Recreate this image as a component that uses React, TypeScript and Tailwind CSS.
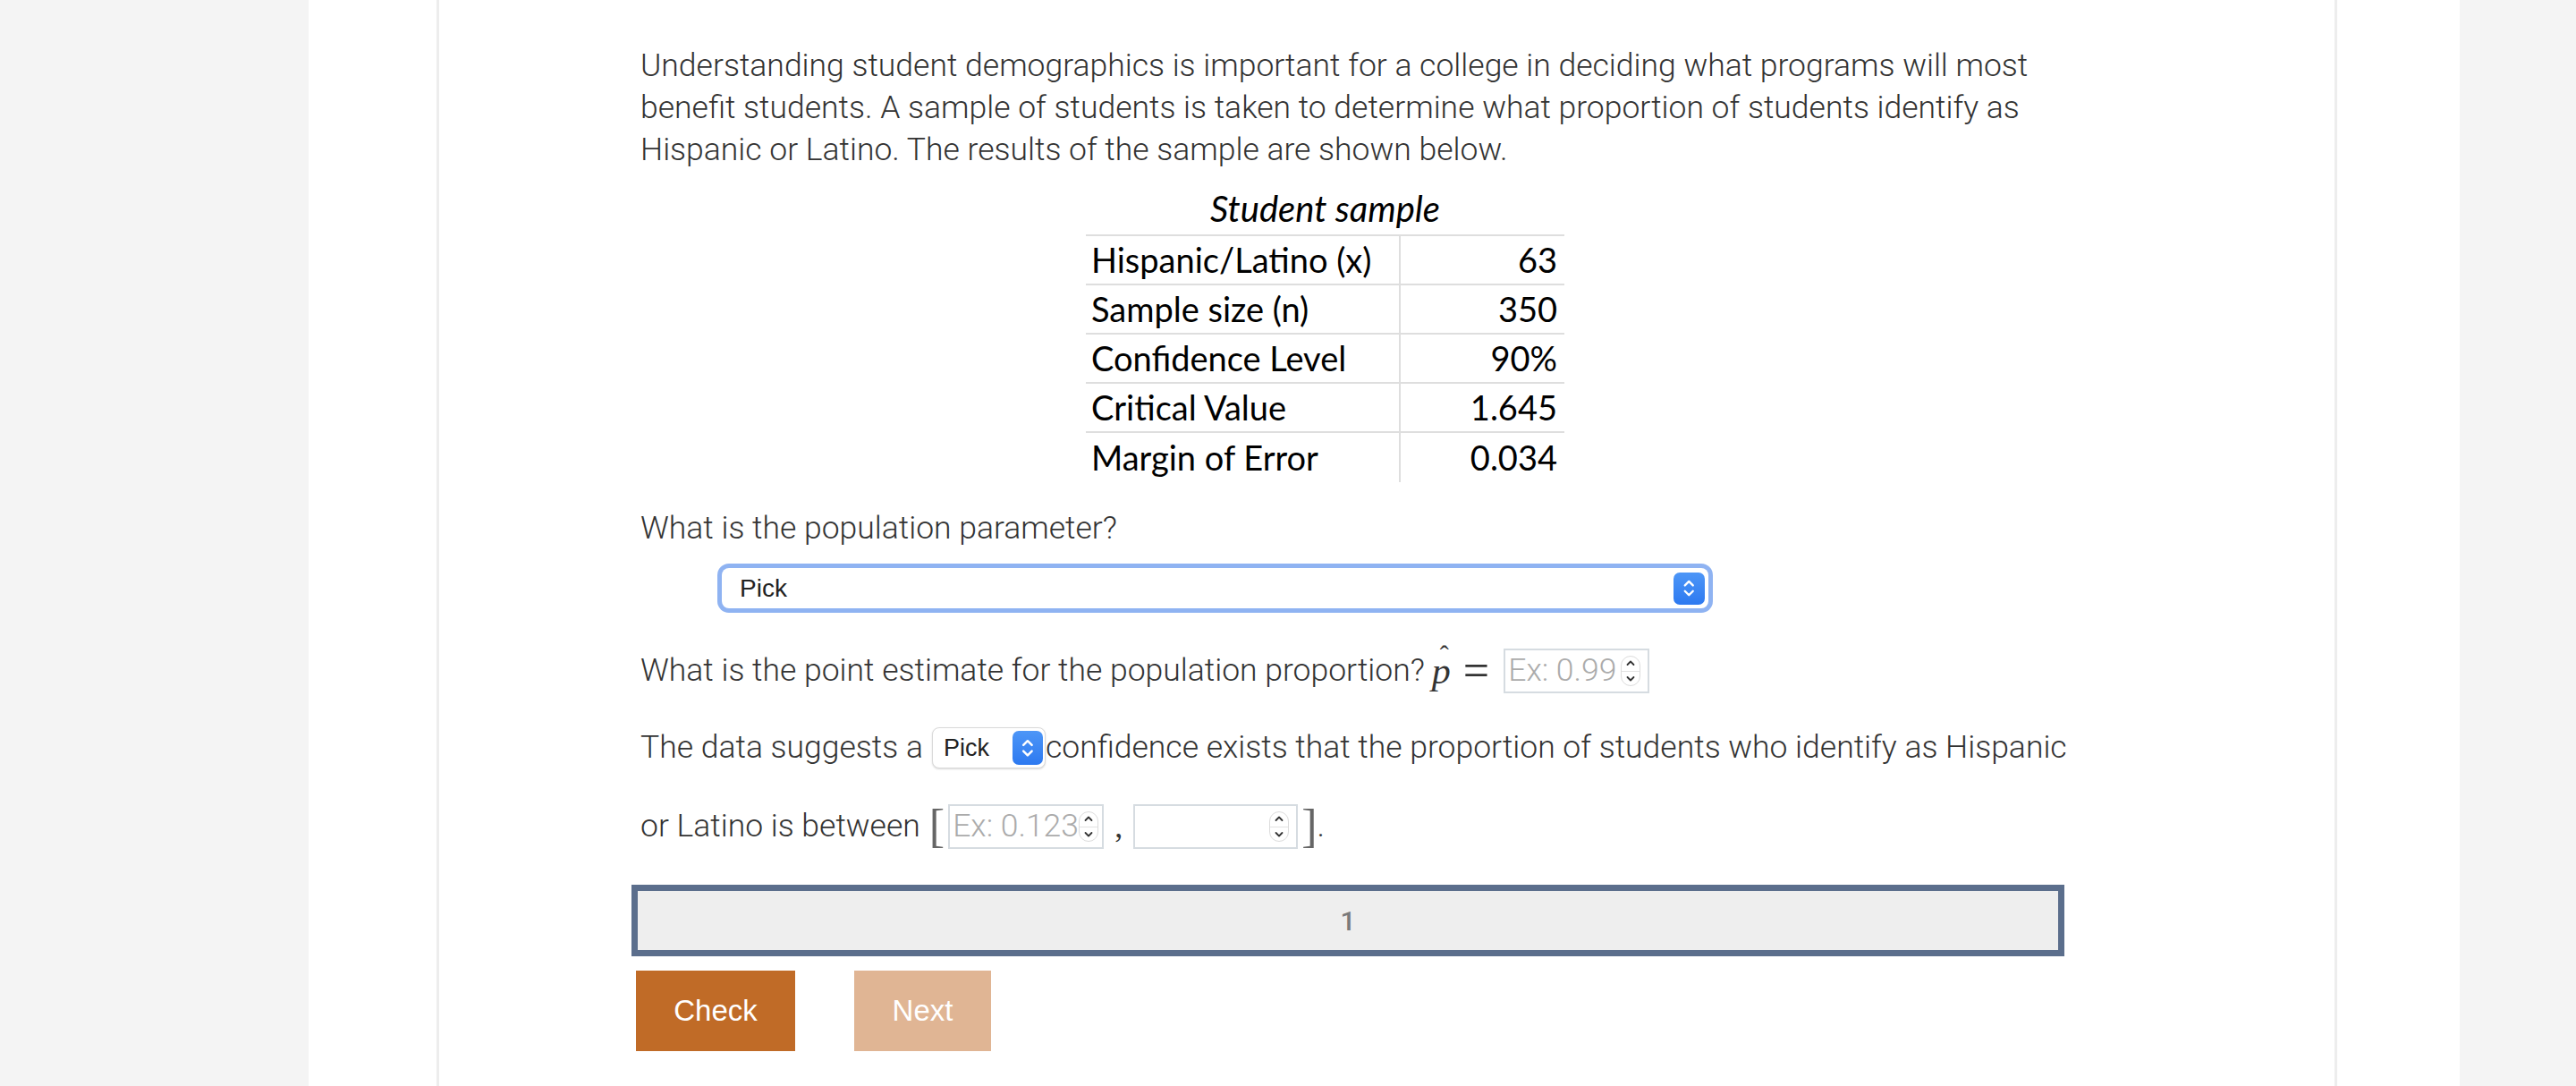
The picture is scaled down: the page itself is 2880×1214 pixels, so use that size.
import React from "react";

const rows = [
  { label: "Hispanic/Latino (x)", value: "63" },
  { label: "Sample size (n)", value: "350" },
  { label: "Confidence Level", value: "90%" },
  { label: "Critical Value", value: "1.645" },
  { label: "Margin of Error", value: "0.034" },
];

function BlueStepper({ className }: { className: string }) {
  return (
    <span className={`flex shrink-0 items-center justify-center rounded-[7px] bg-gradient-to-b from-[#4d96f7] to-[#2d79f0] ${className}`}>
      <svg viewBox="0 0 20 28" className="h-[70%] w-[70%]" fill="none" stroke="white" strokeWidth="2.6" strokeLinecap="round" strokeLinejoin="round">
        <path d="M5 10.5 L10 5.5 L15 10.5" />
        <path d="M5 17.5 L10 22.5 L15 17.5" />
      </svg>
    </span>
  );
}

function Spinner() {
  return (
    <span className="flex h-[34px] w-[22px] shrink-0 flex-col items-center justify-between rounded-full border border-[#dcdcdc] bg-white py-[3px]">
      <svg viewBox="0 0 12 8" className="h-[8px] w-[12px]" fill="none" stroke="#333" strokeWidth="1.8" strokeLinecap="round" strokeLinejoin="round">
        <path d="M2.5 6 L6 2.5 L9.5 6" />
      </svg>
      <span className="h-px w-full bg-[#e3e3e3]" />
      <svg viewBox="0 0 12 8" className="h-[8px] w-[12px]" fill="none" stroke="#333" strokeWidth="1.8" strokeLinecap="round" strokeLinejoin="round">
        <path d="M2.5 2 L6 5.5 L9.5 2" />
      </svg>
    </span>
  );
}

function NumberBox({ placeholder, width }: { placeholder: string; width: string }) {
  return (
    <span className={`inline-flex h-[50px] shrink-0 items-center justify-between border-2 border-[#d6dce1] bg-white pl-[3px] pr-[8px] ${width}`}>
      <span className="text-[#ababab]">{placeholder}</span>
      <Spinner />
    </span>
  );
}

export default function App() {
  return (
    <div className="flex min-h-[1214px] bg-[#f4f4f4] font-['Roboto',sans-serif] font-light text-[35.5px] text-[#333]">
      <div className="ml-[345px] flex w-[2405px] bg-white">
        <div className="ml-[143px] w-[2125px] border-x-[3px] border-[#ededed]">
          <div className="ml-[215px] w-[1602px] pb-[40px] pt-[50px]">
            <p className="pl-[10px] leading-[47px]">
              Understanding student demographics is important for a college in deciding what programs will most
              benefit students. A sample of students is taken to determine what proportion of students identify as
              Hispanic or Latino. The results of the sample are shown below.
            </p>

            <div className="ml-[508px] mt-[14px] w-[535px] font-['Lato',sans-serif] font-normal text-black">
              <div className="h-[57px] text-center text-[40px] italic leading-[57px]">Student sample</div>
              <div className="border-t-2 border-[#dedede]">
                {rows.map((r, i) => (
                  <div key={r.label} className={`flex h-[55px] ${i < rows.length - 1 ? "border-b-2 border-[#dedede]" : ""}`}>
                    <div className="flex w-[352px] items-center border-r-2 border-[#dedede] pl-[6px] text-[38px]">{r.label}</div>
                    <div className="flex flex-1 items-center justify-end pr-[8px] text-[38px]">{r.value}</div>
                  </div>
                ))}
              </div>
            </div>

            <p className="mt-[28px] pl-[10px] leading-[47px]">What is the population parameter?</p>

            <div className="ml-[96px] mt-[16px] h-[55px] w-[1113px] rounded-[13px] bg-[#8fb3f2] p-[5px]">
              <div className="flex h-full items-center justify-between rounded-[8px] bg-white pl-[20px] pr-[4px]">
                <span className="font-['Liberation_Sans',sans-serif] font-normal text-[28px] text-[#222]">Pick</span>
                <BlueStepper className="h-[36px] w-[35px]" />
              </div>
            </div>

            <div className="mt-[40px] flex h-[50px] items-center whitespace-nowrap pl-[10px]">
              <span>What is the point estimate for the population proportion?</span>
              <span className="relative ml-[8px] font-['Liberation_Serif',serif] text-[42px] font-normal italic leading-none">
                p
                <span className="absolute left-[9px] top-[-12px] not-italic text-[30px] leading-none">ˆ</span>
              </span>
              <span className="ml-[14px] mr-[16px] font-['Liberation_Serif',serif] text-[52px] font-normal leading-none">=</span>
              <NumberBox placeholder="Ex: 0.99" width="w-[163px]" />
            </div>

            <div className="mt-[36px] flex h-[50px] items-center whitespace-nowrap pl-[10px]">
              <span>The data suggests a</span>
              <span className="ml-[10px] flex h-[46px] w-[127px] shrink-0 items-center justify-between rounded-[8px] border border-[#d9d9d9] bg-white pl-[12px] pr-[2px] shadow-[0_1px_2px_rgba(0,0,0,0.15)]">
                <span className="font-['Liberation_Sans',sans-serif] font-normal text-[27px] text-[#222]">Pick</span>
                <BlueStepper className="h-[38px] w-[34px]" />
              </span>
              <span>confidence exists that the proportion of students who identify as Hispanic</span>
            </div>

            <div className="mt-[36px] flex h-[54px] items-center whitespace-nowrap pl-[10px]">
              <span>or Latino is between</span>
              <span className="ml-[10px] mr-[4px] font-['Liberation_Serif',serif] text-[52px] font-light leading-none text-[#666]">[</span>
              <NumberBox placeholder="Ex: 0.123" width="w-[174px]" />
              <span className="mx-[12px] font-['Liberation_Serif',serif] text-[36px] font-normal">,</span>
              <NumberBox placeholder="" width="w-[184px]" />
              <span className="ml-[4px] font-['Liberation_Serif',serif] text-[52px] font-light leading-none text-[#666]">]</span>
              <span>.</span>
            </div>

            <div className="mt-[38px] flex h-[80px] items-center justify-center border-[7px] border-[#5b6e8c] bg-[#eeeeee] text-[30px] font-medium text-[#7a7a7a]">
              1
            </div>

            <div className="mt-[16px] flex gap-[66px] pl-[5px] font-['Liberation_Sans',sans-serif] text-[33px] font-normal text-white">
              <button className="h-[90px] w-[178px] bg-[#c06b27]">Check</button>
              <button className="h-[90px] w-[153px] bg-[#e0b594]">Next</button>
            </div>
          </div>
        </div>
      </div>
    </div>
  );
}
